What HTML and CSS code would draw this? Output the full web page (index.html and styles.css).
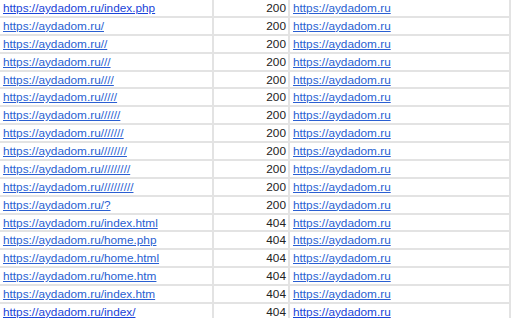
FILE: index.html
```html
<!DOCTYPE html>
<html>
<head>
<meta charset="utf-8">
<link rel="stylesheet" href="styles.css">
</head>
<body>
<div class="sheet">
  <div class="row"><a class="cell url strong" href="#">https://aydadom.ru/index.php</a><span class="cell code">200</span><a class="cell url" href="#">https://aydadom.ru</a></div>
  <div class="row"><a class="cell url" href="#">https://aydadom.ru/</a><span class="cell code">200</span><a class="cell url" href="#">https://aydadom.ru</a></div>
  <div class="row"><a class="cell url" href="#">https://aydadom.ru//</a><span class="cell code">200</span><a class="cell url" href="#">https://aydadom.ru</a></div>
  <div class="row"><a class="cell url" href="#">https://aydadom.ru///</a><span class="cell code">200</span><a class="cell url" href="#">https://aydadom.ru</a></div>
  <div class="row"><a class="cell url" href="#">https://aydadom.ru////</a><span class="cell code">200</span><a class="cell url" href="#">https://aydadom.ru</a></div>
  <div class="row"><a class="cell url" href="#">https://aydadom.ru/////</a><span class="cell code">200</span><a class="cell url" href="#">https://aydadom.ru</a></div>
  <div class="row"><a class="cell url" href="#">https://aydadom.ru//////</a><span class="cell code">200</span><a class="cell url" href="#">https://aydadom.ru</a></div>
  <div class="row"><a class="cell url" href="#">https://aydadom.ru///////</a><span class="cell code">200</span><a class="cell url" href="#">https://aydadom.ru</a></div>
  <div class="row"><a class="cell url" href="#">https://aydadom.ru////////</a><span class="cell code">200</span><a class="cell url" href="#">https://aydadom.ru</a></div>
  <div class="row"><a class="cell url" href="#">https://aydadom.ru/////////</a><span class="cell code">200</span><a class="cell url" href="#">https://aydadom.ru</a></div>
  <div class="row"><a class="cell url" href="#">https://aydadom.ru//////////</a><span class="cell code">200</span><a class="cell url" href="#">https://aydadom.ru</a></div>
  <div class="row"><a class="cell url" href="#">https://aydadom.ru/?</a><span class="cell code">200</span><a class="cell url" href="#">https://aydadom.ru</a></div>
  <div class="row"><a class="cell url" href="#">https://aydadom.ru/index.html</a><span class="cell code">404</span><a class="cell url" href="#">https://aydadom.ru</a></div>
  <div class="row"><a class="cell url" href="#">https://aydadom.ru/home.php</a><span class="cell code">404</span><a class="cell url" href="#">https://aydadom.ru</a></div>
  <div class="row"><a class="cell url" href="#">https://aydadom.ru/home.html</a><span class="cell code">404</span><a class="cell url" href="#">https://aydadom.ru</a></div>
  <div class="row"><a class="cell url" href="#">https://aydadom.ru/home.htm</a><span class="cell code">404</span><a class="cell url" href="#">https://aydadom.ru</a></div>
  <div class="row"><a class="cell url" href="#">https://aydadom.ru/index.htm</a><span class="cell code">404</span><a class="cell url" href="#">https://aydadom.ru</a></div>
  <div class="row"><a class="cell url strong" href="#">https://aydadom.ru/index/</a><span class="cell code">404</span><a class="cell url strong" href="#">https://aydadom.ru</a></div>
</div>
</body>
</html>
```
FILE: styles.css
```css
html, body {
  margin: 0;
  padding: 0;
  background: #ffffff;
}
.sheet {
  width: 511px;
  font-family: "Liberation Sans", Arial, sans-serif;
  font-size: 11.8px;
  line-height: 16px;
}
.row {
  display: grid;
  grid-template-columns: 214px 76px 221px;
  height: 17.875px;
  box-sizing: border-box;
  border-bottom: 2px solid #e3e3e3;
}
.cell {
  display: block;
  box-sizing: border-box;
  white-space: nowrap;
  overflow: hidden;
  border-right: 2px solid #e3e3e3;
}
.url {
  color: #2a5fd2;
  text-decoration: underline;
  padding-left: 3px;
}
.url.strong {
  color: #1a44d8;
}
.code {
  color: #222222;
  text-align: right;
  padding-right: 2px;
}
```
